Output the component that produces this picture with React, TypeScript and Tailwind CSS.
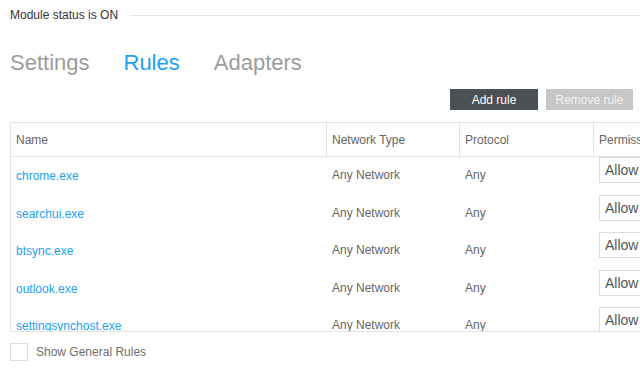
import React from "react";

const rules = [
  { name: "chrome.exe", network: "Any Network", protocol: "Any", permission: "Allow" },
  { name: "searchui.exe", network: "Any Network", protocol: "Any", permission: "Allow" },
  { name: "btsync.exe", network: "Any Network", protocol: "Any", permission: "Allow" },
  { name: "outlook.exe", network: "Any Network", protocol: "Any", permission: "Allow" },
  { name: "settingsynchost.exe", network: "Any Network", protocol: "Any", permission: "Allow" },
];

export default function App() {
  return (
    <div className="w-[640px] h-[385px] overflow-hidden bg-white font-['Liberation_Sans',Arial,sans-serif]">
      {/* Status */}
      <div className="flex items-center h-[30px] pl-[10px]">
        <span className="text-[12px] text-[#333]">Module status is ON</span>
        <div className="flex-1 ml-[12px] h-px bg-[#e6e6e6]" />
      </div>

      {/* Tabs */}
      <div className="flex gap-[34px] pl-[10px] mt-[20px] text-[22px] leading-[26px]">
        <span className="text-[#9c9c9c]">Settings</span>
        <span className="text-[#1da1f2]">Rules</span>
        <span className="text-[#9c9c9c]">Adapters</span>
      </div>

      {/* Actions */}
      <div className="flex justify-end gap-[8px] pr-[7px] mt-[13px]">
        <button className="w-[88px] h-[21px] bg-[#4b5055] text-white text-[12px]">Add rule</button>
        <button className="w-[87px] h-[21px] bg-[#c6c6c6] text-[#f3f3f3] text-[12px]">Remove rule</button>
      </div>

      {/* Table */}
      <div className="ml-[10px] mt-[12px] w-[700px] border-l border-t border-b border-[#e2e2e2]">
        <div className="flex h-[34px] border-b border-[#e2e2e2] text-[12px] text-[#666]">
          <div className="w-[316px] flex items-center pl-[5px] border-r border-[#e2e2e2]">Name</div>
          <div className="w-[133px] flex items-center pl-[5px] border-r border-[#e2e2e2]">Network Type</div>
          <div className="w-[134px] flex items-center pl-[5px] border-r border-[#e2e2e2]">Protocol</div>
          <div className="flex-1 flex items-center pl-[5px]">Permission</div>
        </div>
        <div className="h-[174px] overflow-hidden">
          {rules.map((r) => (
            <div key={r.name} className="flex h-[37.5px] text-[12px] leading-[14px]">
              <div className="w-[316px] pl-[5px] pt-[12px] text-[#1da1f2]">{r.name}</div>
              <div className="w-[133px] pl-[5px] pt-[11px] text-[#666]">{r.network}</div>
              <div className="w-[134px] pl-[5px] pt-[11px] text-[#666]">{r.protocol}</div>
              <div className="flex-1 pl-[5px]">
                <div className="w-[70px] h-[26px] border border-[#dcdcdc] pl-[5px] text-[14px] leading-[24px] text-[#555]">
                  {r.permission}
                </div>
              </div>
            </div>
          ))}
        </div>
      </div>

      {/* Footer */}
      <div className="flex items-center gap-[8px] pl-[10px] mt-[11px]">
        <div className="w-[18px] h-[18px] border border-[#dcdcdc]" />
        <span className="text-[12px] text-[#6f6f6f]">Show General Rules</span>
      </div>
    </div>
  );
}
